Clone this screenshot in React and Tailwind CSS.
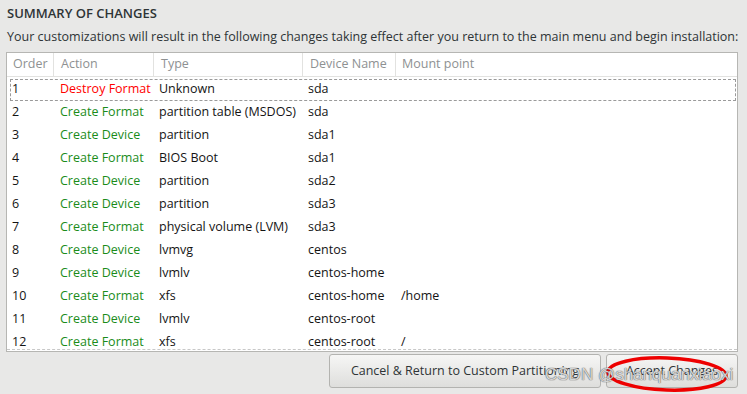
import React from "react";

const rows = [
  ["1", "Destroy Format", "Unknown", "sda", "", true],
  ["2", "Create Format", "partition table (MSDOS)", "sda", ""],
  ["3", "Create Device", "partition", "sda1", ""],
  ["4", "Create Format", "BIOS Boot", "sda1", ""],
  ["5", "Create Device", "partition", "sda2", ""],
  ["6", "Create Device", "partition", "sda3", ""],
  ["7", "Create Format", "physical volume (LVM)", "sda3", ""],
  ["8", "Create Device", "lvmvg", "centos", ""],
  ["9", "Create Device", "lvmlv", "centos-home", ""],
  ["10", "Create Format", "xfs", "centos-home", "/home"],
  ["11", "Create Device", "lvmlv", "centos-root", ""],
  ["12", "Create Format", "xfs", "centos-root", "/"],
];

export default function App() {
  return (
    <div
      className="relative w-[747px] h-[394px] overflow-hidden bg-[#e8e8e7] text-[#2e3436]"
      style={{ fontFamily: '"Open Sans", "Noto Sans", sans-serif' }}
    >
      <div className="px-[7px] pt-[4px] text-[13px] leading-[18px] font-semibold text-[#2e3436]">
        SUMMARY OF CHANGES
      </div>
      <div className="px-[7px] pt-[6px] text-[12.5px] leading-[18px] whitespace-nowrap">
        Your customizations will result in the following changes taking effect after you return to the main menu and begin installation:
      </div>
      <div className="relative ml-[6px] mt-[6px] w-[732px] h-[300px] border border-[#b6b6b3] bg-white overflow-hidden">
        <div className="flex h-[24px] border-b border-[#e2e2e0] text-[12.5px] text-[#8e9192] items-center">
          <div className="w-[47px] h-full flex items-center pl-[6px] border-r border-[#e2e2e0]">Order</div>
          <div className="w-[100px] h-full flex items-center pl-[7px] border-r border-[#e2e2e0]">Action</div>
          <div className="w-[149px] h-full flex items-center pl-[7px] border-r border-[#e2e2e0]">Type</div>
          <div className="w-[93px] h-full flex items-center pl-[7px] border-r border-[#e2e2e0] whitespace-nowrap">Device Name</div>
          <div className="flex-1 h-full flex items-center pl-[6px]">Mount point</div>
        </div>
        <div className="pt-[1px]">
          {rows.map((r) => (
            <div key={r[0]} className="relative flex h-[23px] items-center text-[12.5px] text-[#141414] whitespace-nowrap">
              {r[5] && (
                <div className="absolute left-[3px] right-[1px] top-[1px] bottom-[0px] border border-dashed border-[#9a9a9a]" />
              )}
              <div className="w-[47px] pl-[5px]">{r[0]}</div>
              <div className={"w-[100px] pl-[6px] " + (r[0] === "1" ? "text-[#ff0000]" : "text-[#1a8c1a]")}>{r[1]}</div>
              <div className="w-[149px] pl-[5px]">{r[2]}</div>
              <div className="w-[93px] pl-[5px]">{r[3]}</div>
              <div className="flex-1 pl-[5px]">{r[4]}</div>
            </div>
          ))}
        </div>
        <div className="absolute left-0 right-0 bottom-[1px] border-t border-dashed border-[#c8c8c8]" />
      </div>
      <div className="flex justify-end gap-[5px] pr-[9px] mt-[2px]">
        <button className="w-[272px] h-[34px] rounded-[3px] border border-[#b3b3b0] bg-gradient-to-b from-[#f6f6f5] to-[#dededc] text-[12.5px] text-[#2e3436]">
          Cancel &amp; Return to Custom Partitioning
        </button>
        <button className="w-[132px] h-[34px] rounded-[3px] border border-[#b3b3b0] bg-gradient-to-b from-[#f6f6f5] to-[#dededc] text-[12.5px] text-[#2e3436]">
          Accept Changes
        </button>
      </div>
      <svg className="absolute left-[604px] top-[354px]" width="126" height="40" viewBox="0 0 126 40">
        <ellipse cx="63" cy="20" rx="59" ry="16" fill="none" stroke="#ee0000" strokeWidth="3.5" transform="rotate(2 63 20)" />
      </svg>
      <div
        className="absolute left-[545px] top-[364px] text-[17px] leading-[22px] whitespace-nowrap"
        style={{
          fontFamily: '"Liberation Sans", sans-serif',
          color: "rgba(255,255,255,0.75)",
          textShadow: "0 0 1px rgba(80,80,80,1), 0 0 1px rgba(80,80,80,0.8)",
        }}
      >
        CSDN @shanquanxiaoxi
      </div>
    </div>
  );
}
